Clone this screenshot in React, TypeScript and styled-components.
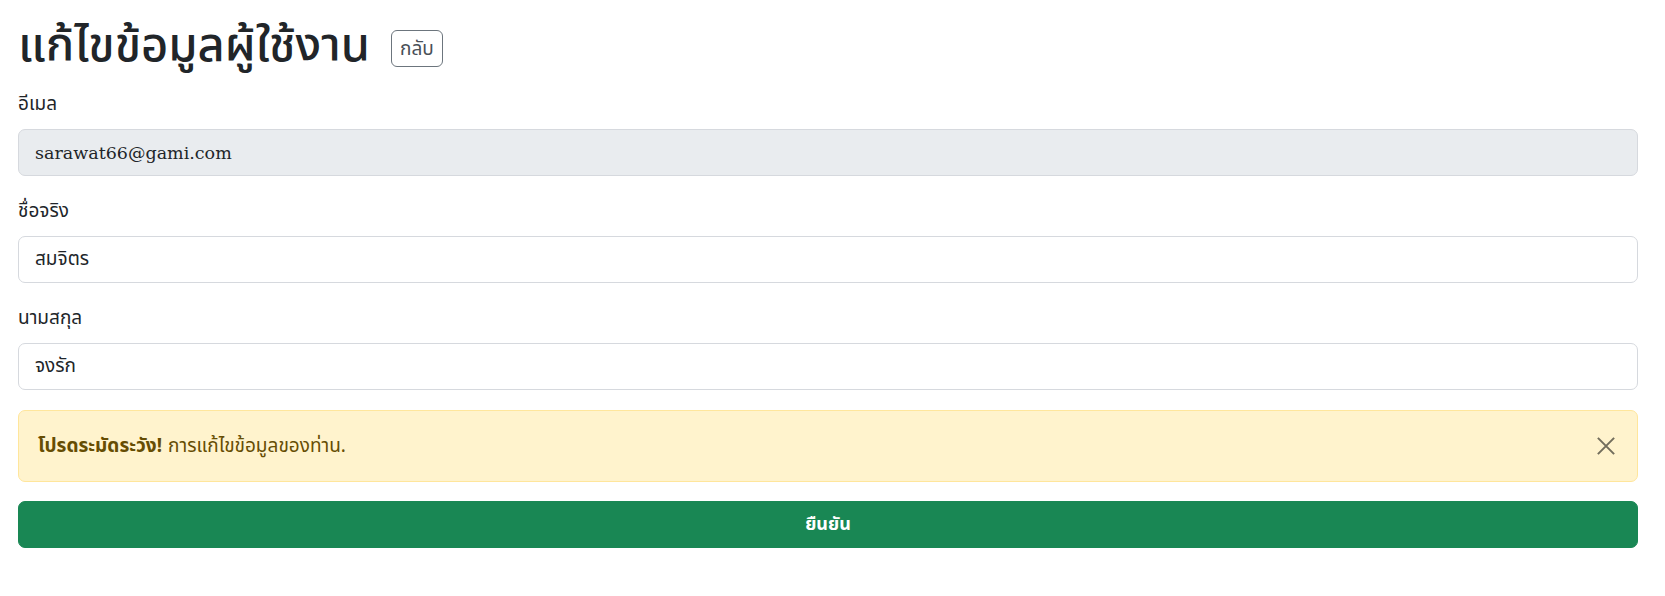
import React from "react";
import styled, { createGlobalStyle } from "styled-components";

const GlobalStyle = createGlobalStyle`
  html, body {
    margin: 0;
    padding: 0;
    background: #ffffff;
  }
  body {
    font-family: "Noto Sans", "Noto Sans Thai", "Leelawadee UI", Tahoma, sans-serif;
    color: #212529;
    -webkit-font-smoothing: antialiased;
  }
  * { box-sizing: border-box; }
`;

const Page = styled.div`
  width: 1620px;
  margin-left: 18px;
`;

const HeaderRow = styled.div`
  display: flex;
  align-items: flex-start;
  gap: 21px;
  padding-top: 15px;
  margin-bottom: 18px;
`;

const Title = styled.h1`
  margin: 0;
  font-size: 47px;
  font-weight: 500;
  line-height: 1.2;
  color: #212529;
`;

const BackButton = styled.button`
  height: 37px;
  margin-top: 15px;
  padding: 0 8px;
  font-family: inherit;
  font-size: 19px;
  line-height: 1;
  color: #495057;
  background: #ffffff;
  border: 1px solid #6c757d;
  border-radius: 6px;
`;

const Field = styled.div`
  display: flex;
  flex-direction: column;
  margin-bottom: 20px;
`;

const Label = styled.label`
  font-size: 19px;
  line-height: 28px;
  margin-bottom: 12px;
  color: #212529;
`;

const Input = styled.input<{ $email?: boolean }>`
  height: 47px;
  width: 100%;
  padding: 0 16px;
  font-family: ${(p) => (p.$email ? '"DejaVu Serif", "Liberation Serif", serif' : "inherit")};
  font-size: ${(p) => (p.$email ? "17.5px" : "19px")};
  color: #212529;
  background: #ffffff;
  border: 1px solid #d6d9de;
  border-radius: 7px;
  &:disabled {
    background: #e9ecef;
    color: #212529;
    -webkit-text-fill-color: #212529;
    opacity: 1;
  }
`;

const Alert = styled.div`
  position: relative;
  display: flex;
  align-items: center;
  height: 72px;
  margin-top: 0;
  padding: 0 60px 0 19px;
  background: #fff3cd;
  border: 1px solid #ffe69c;
  border-radius: 7px;
  color: #664d03;
  font-size: 19px;
`;

const Strong = styled.strong`
  font-weight: 700;
  margin-right: 6px;
`;

const CloseButton = styled.button`
  position: absolute;
  right: 19px;
  top: 50%;
  transform: translateY(-50%);
  width: 24px;
  height: 24px;
  padding: 0;
  display: flex;
  align-items: center;
  justify-content: center;
  background: transparent;
  border: none;
  opacity: 0.55;
`;

const SubmitButton = styled.button`
  display: block;
  width: 100%;
  height: 47px;
  margin-top: 19px;
  font-family: inherit;
  font-size: 18px;
  font-weight: 700;
  color: #ffffff;
  background: #198754;
  border: 1px solid #198754;
  border-radius: 7px;
`;

export default function App() {
  return (
    <>
      <GlobalStyle />
      <Page>
        <HeaderRow>
          <Title>แก้ไขข้อมูลผู้ใช้งาน</Title>
          <BackButton>กลับ</BackButton>
        </HeaderRow>
        <Field>
          <Label>อีเมล</Label>
          <Input $email disabled value="sarawat66@gami.com" readOnly />
        </Field>
        <Field>
          <Label>ชื่อจริง</Label>
          <Input defaultValue="สมจิตร" />
        </Field>
        <Field>
          <Label>นามสกุล</Label>
          <Input defaultValue="จงรัก" />
        </Field>
        <Alert>
          <Strong>โปรดระมัดระวัง!</Strong> การแก้ไขข้อมูลของท่าน.
          <CloseButton aria-label="close">
            <svg width="20" height="20" viewBox="0 0 16 16">
              <path d="M1.5 1.5 L14.5 14.5 M14.5 1.5 L1.5 14.5" stroke="#000" strokeWidth="1.6" />
            </svg>
          </CloseButton>
        </Alert>
        <SubmitButton>ยืนยัน</SubmitButton>
      </Page>
    </>
  );
}
